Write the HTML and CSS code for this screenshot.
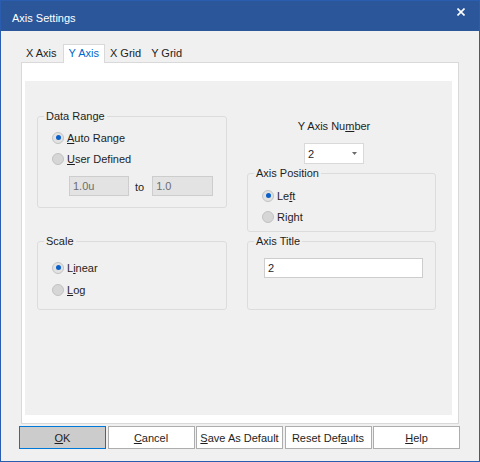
FILE: index.html
```html
<!DOCTYPE html>
<html lang="en">
  <head>
    <meta charset="UTF-8" />
    <meta name="viewport" content="width=device-width, initial-scale=1.0" />
    <title>Axis Settings</title>
    <link rel="stylesheet" href="styles.css">
  </head>
  <body>
    <div class="window">
      <div class="titlebar">
        <span class="title">Axis Settings</span>
        <svg class="close" viewBox="0 0 8 8">
          <path d="M0.5 0.5 L7.5 7.5 M7.5 0.5 L0.5 7.5" stroke="#fff" stroke-width="1.6" />
        </svg>
      </div>

      <div class="content">
        <div class="tabs">
          <div class="tab">X Axis</div>
          <div class="tab active">Y Axis</div>
          <div class="tab">X Grid</div>
          <div class="tab">Y Grid</div>
        </div>

        <div class="page">
          <div class="panel">
            <div class="col col-left">
              <div class="group range">
                <div class="group-title">Data Range</div>
                <div class="options">
                  <div class="radio"><span class="dot on"></span><span><u>A</u>uto Range</span></div>
                  <div class="radio"><span class="dot"></span><span><u>U</u>ser Defined</span></div>
                </div>
                <div class="range-inputs">
                  <input class="field from" type="text" value="1.0u" disabled />
                  <span class="to">to</span>
                  <input class="field until" type="text" value="1.0" disabled />
                </div>
              </div>

              <div class="group scale">
                <div class="group-title">Scale</div>
                <div class="options">
                  <div class="radio"><span class="dot on"></span><span>L<u>i</u>near</span></div>
                  <div class="radio"><span class="dot"></span><span><u>L</u>og</span></div>
                </div>
              </div>
            </div>

            <div class="col col-right">
              <div class="axis-number">
                <div class="label">Y Axis Nu<u>m</u>ber</div>
                <div class="combo">
                  <span>2</span>
                  <svg class="arrow" viewBox="0 0 5 3"><path d="M0 0 H5 L2.5 3 Z" fill="#6b6b6b" /></svg>
                </div>
              </div>

              <div class="group position">
                <div class="group-title">Axis Position</div>
                <div class="options">
                  <div class="radio"><span class="dot on"></span><span>Le<u>f</u>t</span></div>
                  <div class="radio"><span class="dot"></span><span>Ri<u>g</u>ht</span></div>
                </div>
              </div>

              <div class="group axis-title">
                <div class="group-title">Axis Title</div>
                <input class="field title-input" type="text" value="2" />
              </div>
            </div>
          </div>
        </div>
      </div>

      <div class="buttons">
        <button class="btn default"><u>O</u>K</button>
        <button class="btn"><u>C</u>ancel</button>
        <button class="btn"><u>S</u>ave As Default</button>
        <button class="btn">Reset Def<u>a</u>ults</button>
        <button class="btn"><u>H</u>elp</button>
      </div>
    </div>
  </body>
</html>
```

FILE: styles.css
```css
body {
  margin: 0;
  font-family: "Liberation Sans", Arial, sans-serif;
  font-size: 11px;
  color: #1e1e1e;
}
.window {
  width: 480px;
  height: 462px;
  box-sizing: border-box;
  border: 1px solid #2a5db0;
  background: #f0f0f0;
}
.titlebar {
  height: 30px;
  background: #2b579a;
  color: #fff;
  display: flex;
  justify-content: space-between;
  align-items: flex-start;
  padding: 0 14px 0 11px;
}
.title {
  margin-top: 11px;
  line-height: 13px;
}
.close {
  width: 8px;
  height: 8px;
  margin-top: 7px;
}
.content {
  padding: 13px 0 0 20px;
}
.tabs {
  display: flex;
  align-items: flex-end;
  height: 18px;
}
.tab {
  padding: 0 5px;
  line-height: 18px;
  color: #222;
}
.tab.active {
  position: relative;
  z-index: 1;
  background: #fff;
  border: 1px solid #d9d9d9;
  border-bottom: 0;
  line-height: 17px;
  padding-bottom: 1px;
  margin: 0 -1px -1px 1px;
  color: #0066cc;
}
.tab.active + .tab {
  margin-left: 1px;
}
.page {
  width: 438px;
  height: 362px;
  box-sizing: border-box;
  border: 1px solid #d9d9d9;
  background: #fff;
  padding: 18px 6px 8px 3px;
}
.panel {
  height: 100%;
  box-sizing: border-box;
  background: #f0f0f0;
  display: flex;
  gap: 20px;
  padding: 35px 0 0 12px;
}
.col {
  display: flex;
  flex-direction: column;
}
.col-left {
  width: 190px;
}
.col-right {
  width: 189px;
}
.group {
  box-sizing: border-box;
  border: 1px solid #dcdcdc;
  border-radius: 3px;
  padding-left: 14px;
}
.group-title {
  width: fit-content;
  margin: -7px 0 0 -8px;
  padding: 0 2px;
  background: #f0f0f0;
  line-height: 13px;
}
.radio {
  display: flex;
  align-items: center;
  height: 21px;
}
.dot {
  width: 12px;
  height: 12px;
  box-sizing: border-box;
  border: 1px solid #c2c2c2;
  border-radius: 50%;
  background: #d6d6d6;
  margin-right: 3px;
  display: flex;
  align-items: center;
  justify-content: center;
}
.dot.on {
  background: #e2e2e2;
}
.dot.on::after {
  content: "";
  width: 5px;
  height: 5px;
  border-radius: 50%;
  background: #0a5fc8;
}
.field {
  box-sizing: border-box;
  height: 20px;
  border: 1px solid #cdcdcd;
  padding: 0 3px;
  margin: 0;
  font: inherit;
  color: #1e1e1e;
  background: #fff;
  outline: none;
}
.field:disabled {
  background: #e3e3e3;
  color: #6d6d6d;
}

/* Data Range */
.range {
  height: 92px;
}
.range .options {
  margin-top: 4px;
}
.range-inputs {
  display: flex;
  align-items: center;
  margin: 7px 0 0 17px;
}
.field.from {
  width: 60px;
}
.field.until {
  width: 61px;
}
.to {
  margin: 2px 8px 0 6px;
}

/* Scale */
.scale {
  height: 69px;
  margin-top: 33px;
}
.scale .options {
  margin-top: 9px;
}
.scale .radio + .radio {
  margin-top: 1px;
}

/* Right column */
.axis-number {
  width: 80px;
  margin: 4px 0 0 47px;
  text-align: center;
}
.label {
  line-height: 13px;
}
.combo {
  width: 60px;
  height: 21px;
  box-sizing: border-box;
  margin: 10px auto 0;
  border: 1px solid #d9d9d9;
  background: #fff;
  display: flex;
  justify-content: space-between;
  align-items: center;
  padding: 0 6px 0 3px;
}
.arrow {
  width: 5px;
  height: 3px;
}
.position {
  height: 59px;
  margin-top: 9px;
}
.position .options {
  margin-top: 5px;
}
.axis-title {
  height: 69px;
  margin-top: 9px;
}
.title-input {
  display: block;
  width: 159px;
  margin: 10px 0 0 2px;
}

/* Buttons */
.buttons {
  display: flex;
  justify-content: space-between;
  margin-top: 2px;
  padding: 0 19px 0 18px;
}
.btn {
  width: 87px;
  height: 23px;
  box-sizing: border-box;
  border: 1px solid #adadad;
  background: #fff;
  font: inherit;
  color: #1e1e1e;
  padding: 0;
}
.btn.default {
  background: #cccccc;
  border-color: #0078d7;
}
```
